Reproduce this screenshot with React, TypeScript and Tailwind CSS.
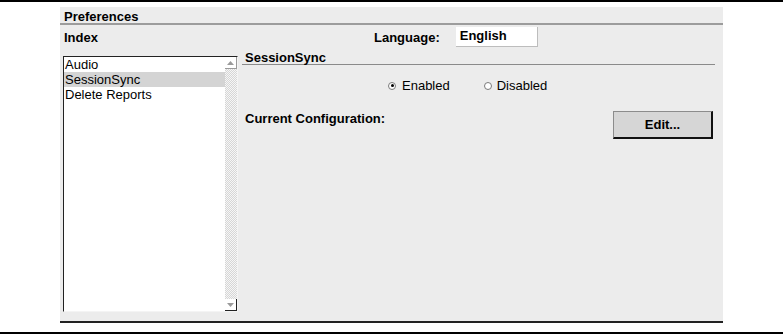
export default function App() {
  const items = ["Audio", "SessionSync", "Delete Reports"];

  return (
    <div className="w-[783px] h-[334px] bg-white flex flex-col font-['Liberation_Sans',Arial,sans-serif] text-black">
      <div className="h-[2px] bg-black" />

      {/* Panel */}
      <div className="ml-[60px] mt-[5px] w-[663px] h-[316px] bg-[#ececec] border-b-2 border-[#222] flex flex-col">
        <div className="h-[18px] border-b-2 border-[#9c9c9c] pl-[4px] pt-[1px] text-[13px] font-bold leading-[17px]">
          Preferences
        </div>

        <div className="flex flex-1">
          {/* Index column */}
          <div className="w-[178px] pl-[3px] flex flex-col">
            <div className="mt-[5px] pl-[1px] text-[13px] font-bold leading-[15px]">Index</div>
            <div className="mt-[11px] h-[256px] flex border-l border-t border-[#222] border-r border-b border-r-[#f4f4f4] border-b-[#f4f4f4]">
              <ul className="flex-1 bg-white text-[13px] leading-[15px]">
                {items.map((item) => (
                  <li
                    key={item}
                    className={item === "SessionSync" ? "pl-[1px] bg-[#d4d4d4]" : "pl-[1px]"}
                  >
                    {item}
                  </li>
                ))}
              </ul>
              <div className="w-[12px] flex flex-col justify-between bg-[repeating-conic-gradient(#d6d6d6_0%_25%,#f6f6f6_0%_50%)] bg-[length:2px_2px]">
                <div className="h-[12px] bg-white border-r border-b border-[#9a9a9a] flex items-center justify-center">
                  <svg width="7" height="4" viewBox="0 0 7 4">
                    <path d="M3.5 0 L7 4 L0 4 Z" fill="#9a9a9a" />
                  </svg>
                </div>
                <div className="h-[12px] bg-white border-r border-b border-[#222] flex items-center justify-center">
                  <svg width="7" height="4" viewBox="0 0 7 4">
                    <path d="M0 0 L7 0 L3.5 4 Z" fill="#9a9a9a" />
                  </svg>
                </div>
              </div>
            </div>
          </div>

          {/* Detail column */}
          <div className="flex-1 ml-[4px] mr-[8px] flex flex-col">
            <div className="mt-[2px] pl-[132px] flex items-center gap-[16px] text-[13px] font-bold">
              <span className="leading-[15px]">Language:</span>
              <div className="w-[82px] h-[20px] bg-white border-r border-b border-[#bdbdbd] pl-[4px] leading-[18px]">
                English
              </div>
            </div>

            <div className="mt-[3px] pl-[3px] h-[15px] border-b border-[#8a8a8a] text-[13px] font-bold leading-[15px]">
              SessionSync
            </div>

            <div className="mt-[13px] pl-[146px] flex items-center text-[13px] leading-[15px]">
              <span className="w-[8px] h-[8px] rounded-full border border-[#7a7a7a] bg-white flex items-center justify-center">
                <span className="w-[3px] h-[3px] rounded-full bg-black" />
              </span>
              <span className="ml-[6px]">Enabled</span>
              <span className="ml-[34px] w-[8px] h-[8px] rounded-full border border-[#7a7a7a] bg-white" />
              <span className="ml-[5px]">Disabled</span>
            </div>

            <div className="mt-[18px] pl-[3px] pr-[2px] flex items-start justify-between">
              <span className="text-[13px] font-bold leading-[15px]">Current Configuration:</span>
              <button className="w-[100px] h-[28px] bg-[#d6d6d6] border-t border-l border-[#8c8c8c] border-r-2 border-b-2 border-r-[#111] border-b-[#111] text-[13px] font-bold">
                Edit...
              </button>
            </div>
          </div>
        </div>
      </div>

      <div className="flex-1" />
      <div className="h-[2px] bg-black" />
    </div>
  );
}
